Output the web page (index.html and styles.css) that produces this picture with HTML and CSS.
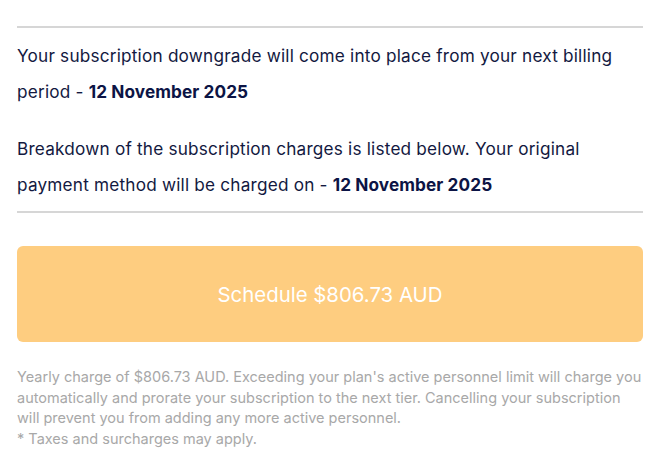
FILE: index.html
```html
<!DOCTYPE html>
<html lang="en">
<head>
<meta charset="utf-8">
<title>Subscription downgrade</title>
<link rel="stylesheet" href="styles.css">
</head>
<body>
<div class="panel">
  <hr class="rule">
  <p class="msg">Your subscription downgrade will come into place from your next billing period - <strong>12 November 2025</strong></p>
  <p class="msg">Breakdown of the subscription charges is listed below. Your original payment method will be charged on - <strong>12 November 2025</strong></p>
  <hr class="rule">
  <button class="schedule" type="button">Schedule $806.73 AUD</button>
  <p class="note">Yearly charge of $806.73 AUD. Exceeding your plan's active personnel limit will charge you automatically and prorate your subscription to the next tier. Cancelling your subscription will prevent you from adding any more active personnel.<br>* Taxes and surcharges may apply.</p>
</div>
</body>
</html>
```
FILE: styles.css
```css
html, body {
  margin: 0;
  padding: 0;
  background: #ffffff;
}
body {
  font-family: Inter, "Noto Sans", sans-serif;
}
.panel {
  padding: 26px 21px 0 17px;
  display: flex;
  flex-direction: column;
}
.rule {
  margin: 0;
  border: 0;
  height: 2px;
  background: #d6d6d6;
}
.msg {
  margin: 0;
  font-size: 17.2px;
  line-height: 36px;
  letter-spacing: 0.2px;
  color: #13193f;
}
.msg:first-of-type {
  margin-top: 10px;
}
.msg + .msg {
  margin-top: 21px;
}
.msg + .rule {
  margin-top: 8px;
}
.msg strong {
  font-weight: 700;
  letter-spacing: 0.1px;
  color: #0c1445;
}
.schedule {
  margin-top: 33px;
  height: 96px;
  border: 0;
  border-radius: 6px;
  background: #fecd80;
  color: #ffffff;
  font-family: inherit;
  font-size: 20.4px;
  font-weight: 400;
  cursor: pointer;
}
.note {
  margin: 25px 0 0;
  font-size: 14.5px;
  line-height: 20.7px;
  color: #a8a8a8;
}
```
